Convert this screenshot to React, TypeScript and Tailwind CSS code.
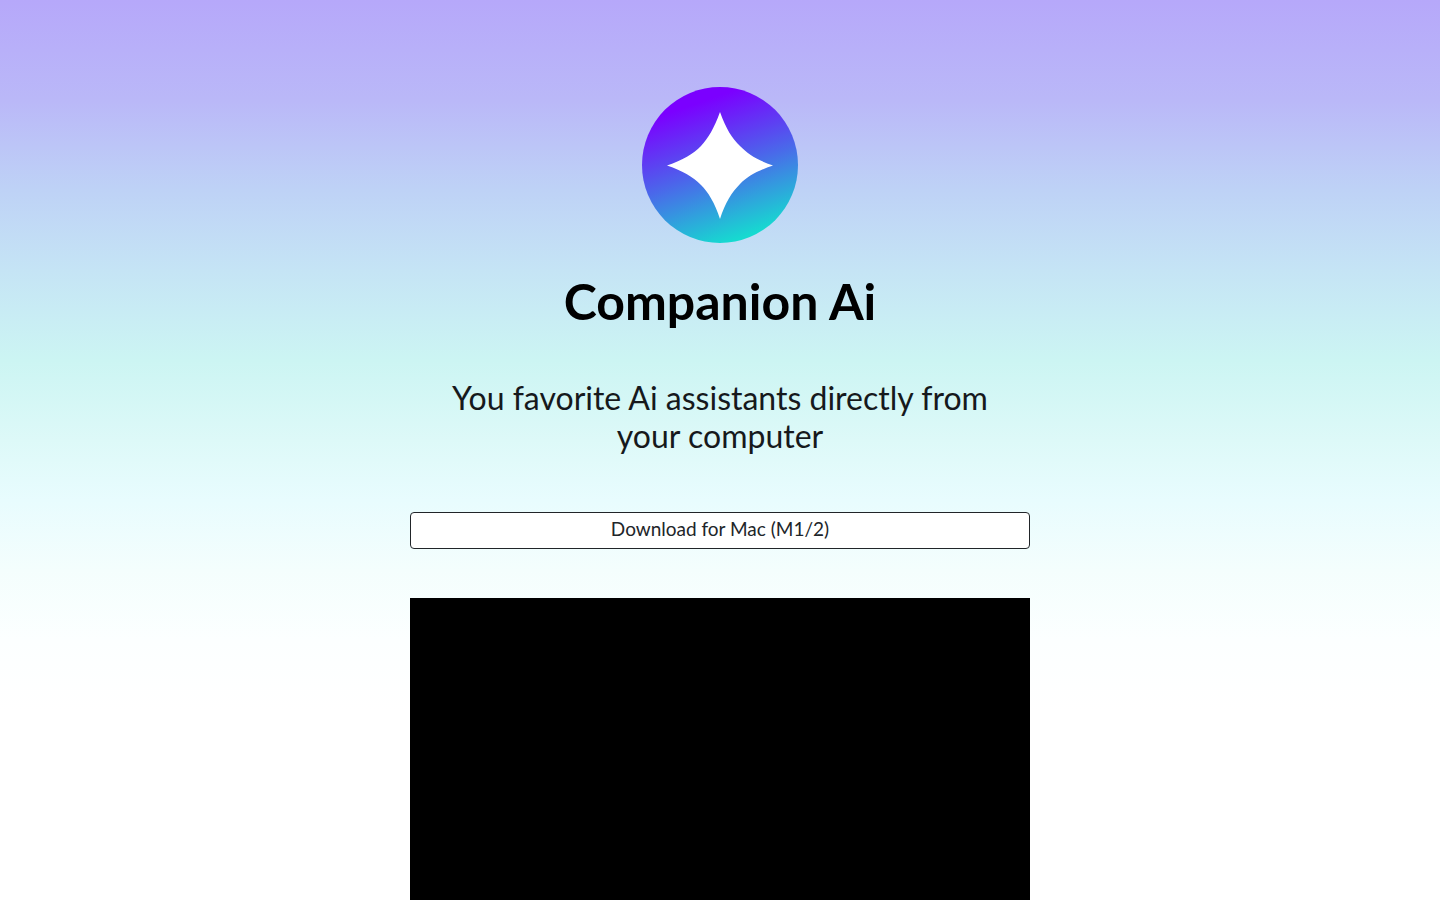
function Logo() {
  return (
    <svg viewBox="0 0 156 156" className="size-[156px]" aria-hidden="true">
      <defs>
        <linearGradient
          id="logo-fill"
          gradientUnits="userSpaceOnUse"
          x1="50"
          y1="18"
          x2="96"
          y2="152"
        >
          <stop offset="0" stopColor="#7b00ff" />
          <stop offset="0.5" stopColor="#4a68ea" />
          <stop offset="1" stopColor="#16dad0" />
        </linearGradient>
      </defs>
      <circle cx="78" cy="78" r="78" fill="url(#logo-fill)" />
      <path
        d="M78 25 C84 42 90 51 98 59 C106 67 115 73 131 78.5 C115 84 106 89 98 97 C90 105 83 116 78 132 C73 116 66 105 59 98 C51 90 41 84 25 78.5 C41 73 51 67 59 59 C66 51 72 42 78 25 Z"
        fill="#fff"
      />
    </svg>
  );
}

export default function App() {
  return (
    <div className="min-h-screen bg-white bg-[linear-gradient(to_bottom,#b6a8fa_0px,#bab8f8_100px,#bed2f6_190px,#c5e4f5_270px,#ccf5f3_360px,#ddf9f8_440px,#e8fcfe_500px,#f4fefd_570px,#fcffff_640px,#ffffff_710px)] px-3 pt-[87px] font-['Lato','Open_Sans',sans-serif] text-[#212529]">
      <main className="mx-auto flex max-w-[620px] flex-col items-center">
        <Logo />
        <h1 className="mt-7 text-[50px] leading-[60px] font-bold text-black">Companion Ai</h1>
        <h2 className="mt-12 px-6 text-center text-[32px] leading-[38px] text-[#16191c]">
          You favorite Ai assistants directly from your computer
        </h2>
        <button
          type="button"
          className="mt-[57px] h-[37px] w-full rounded border border-[#212529] bg-white pb-1 text-[19px] leading-7"
        >
          Download for Mac (M1/2)
        </button>
        <video className="mt-[49px] aspect-video w-full bg-black" aria-label="Companion Ai demo" />
      </main>
    </div>
  );
}
